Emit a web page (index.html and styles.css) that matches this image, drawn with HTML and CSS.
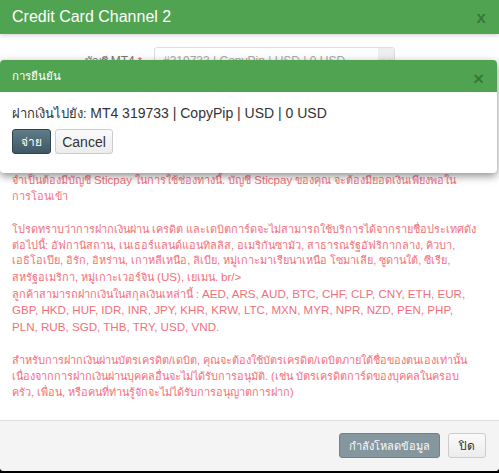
FILE: index.html
```html
<!DOCTYPE html>
<html lang="th">
<head>
  <meta charset="UTF-8">
  <meta name="viewport" content="width=device-width, initial-scale=1.0">
  <title>Credit Card Channel 2</title>
  <link rel="stylesheet" href="styles.css">
</head>
<body>
  <div class="modal">
    <div class="modal-header">
      <h4 class="modal-title">Credit Card Channel 2</h4>
      <button class="close close-main" type="button">x</button>
    </div>

    <div class="modal-body">
      <div class="form-row">
        <label class="form-label">บัญชี <span class="latin">MT4</span> <span class="req">*</span></label>
        <div class="select">
          <span class="select-text">#319733 | CopyPip | USD | 0 USD</span>
          <span class="select-arrow">
            <svg width="8" height="5" viewBox="0 0 8 5"><path d="M0.5 0.5 L4 4 L7.5 0.5" fill="none" stroke="#bbb" stroke-width="1"/></svg>
          </span>
        </div>
      </div>
      <div class="form-row">
        <label class="form-label">จำนวนเงิน <span class="req">*</span></label>
        <div class="select">
          <span class="select-text">0.00</span>
        </div>
      </div>

      <div class="notice">
        <p>จำเป็นต้องมีบัญชี <span class="latin">Sticpay</span> ในการใช้ช่องทางนี้. บัญชี <span class="latin">Sticpay</span> ของคุณ จะต้องมียอดเงินเพียงพอใน<br>การโอนเข้า</p>
        <p>โปรดทราบว่าการฝากเงินผ่าน เครดิต และเดบิตการ์ดจะไม่สามารถใช้บริการได้จากรายชื่อประเทศดัง<br>ต่อไปนี้: อัฟกานิสถาน, เนเธอร์แลนด์แอนทิลลิส, อเมริกันซามัว, สาธารณรัฐอัฟริกากลาง, คิวบา,<br>เอธิโอเปีย, อิรัก, อิหร่าน, เกาหลีเหนือ, ลิเบีย, หมู่เกาะมาเรียนาเหนือ โซมาเลีย, ซูดานใต้, ซีเรีย,<br>สหรัฐอเมริกา, หมู่เกาะเวอร์จิน <span class="latin">(US)</span>, เยเมน. <span class="latin">br/&gt;</span><br>ลูกค้าสามารถฝากเงินในสกุลเงินเหล่านี้ : <span class="latin">AED, ARS, AUD, BTC, CHF, CLP, CNY, ETH, EUR,<br>GBP, HKD, HUF, IDR, INR, JPY, KHR, KRW, LTC, MXN, MYR, NPR, NZD, PEN, PHP,<br>PLN, RUB, SGD, THB, TRY, USD, VND.</span></p>
        <p>สำหรับการฝากเงินผ่านบัตรเครดิต/เดบิต, คุณจะต้องใช้บัตรเครดิต/เดบิตภายใต้ชื่อของตนเองเท่านั้น<br>เนื่องจากการฝากเงินผ่านบุคคลอื่นจะไม่ได้รับการอนุมัติ. (เช่น บัตรเครดิตการ์ดของบุคคลในครอบ<br>ครัว, เพื่อน, หรือคนที่ท่านรู้จักจะไม่ได้รับการอนุญาตการฝาก)</p>
      </div>
    </div>

    <div class="modal-footer">
      <button class="btn btn-dark" type="button" disabled>กำลังโหลดข้อมูล</button>
      <button class="btn btn-default" type="button">ปิด</button>
    </div>
  </div>

  <!-- confirm dialog on top of the deposit modal -->
  <div class="confirm">
    <div class="confirm-header">
      <span class="confirm-title">การยืนยัน</span>
      <button class="close close-small" type="button">&times;</button>
    </div>
    <div class="confirm-body">
      <div class="confirm-text">ฝากเงินไปยัง: <span class="latin">MT4 319733 | CopyPip | USD | 0 USD</span></div>
      <div class="confirm-actions">
        <button class="btn btn-pay" type="button">จ่าย</button>
        <button class="btn btn-default btn-cancel" type="button">Cancel</button>
      </div>
    </div>
  </div>
</body>
</html>
```

FILE: styles.css
```css
body {
  margin: 0;
  background-color: #000;
  font-family: "Liberation Sans", Arial, "Noto Sans", sans-serif;
  color: #333;
}
.modal {
  width: 499px;
  height: 471px;
  display: flex;
  flex-direction: column;
  background-color: #fff;
  border-radius: 0 0 4px 4px;
  overflow: hidden;
}
.modal-header {
  height: 34px;
  flex: none;
  display: flex;
  align-items: center;
  justify-content: space-between;
  padding: 0 13px 0 12px;
  background-color: #50a351;
  box-shadow: 0 2px 4px rgba(0, 0, 0, 0.15);
  position: relative;
}
.modal-title {
  margin: 0;
  color: #fff;
  font-size: 16px;
  font-weight: normal;
}
.close {
  background: none;
  border: none;
  padding: 0;
  cursor: pointer;
  font-family: "Liberation Sans", Arial, sans-serif;
  font-weight: bold;
  color: rgba(0, 0, 0, 0.28);
}
.close-main {
  font-size: 17px;
  line-height: 1;
}
.close-small {
  font-size: 19px;
  line-height: 1;
  margin-top: 4px;
}
.modal-body {
  flex: 1;
  padding: 13px 20px 0 12px;
}
.form-row {
  display: flex;
  align-items: center;
  margin-bottom: 12px;
}
.form-label {
  width: 130px;
  padding-right: 12px;
  text-align: right;
  font-size: 11px;
  color: #777;
}
.form-label .latin {
  font-size: 12px;
}
.req {
  color: #e25555;
}
.select {
  width: 241px;
  height: 28px;
  display: flex;
  align-items: center;
  justify-content: space-between;
  border: 1px solid #ddd;
  border-radius: 3px;
  box-sizing: border-box;
  font-size: 12px;
  color: #aaa;
}
.select-text {
  padding-left: 8px;
}
.select-arrow {
  width: 16px;
  height: 26px;
  display: flex;
  align-items: center;
  justify-content: center;
  background-color: #eee;
}
.notice {
  margin-top: 57px;
  font-size: 10.9px;
  line-height: 15.6px;
  color: #f2707a;
  white-space: nowrap;
}
.notice .latin {
  font-size: 11.6px;
}
.notice p {
  margin: 0 0 18px;
}
.modal-footer {
  flex: none;
  display: flex;
  justify-content: flex-end;
  gap: 8px;
  padding: 12px 13px 13px;
  background-color: #f4f4f4;
  border-top: 1px solid #ddd;
}
.btn {
  height: 25px;
  padding: 0 10px;
  border-radius: 3px;
  font-family: "Liberation Sans", Arial, sans-serif;
  font-size: 12px;
  white-space: nowrap;
  cursor: pointer;
}
.btn-default {
  background: linear-gradient(#fafafa, #ececec);
  border: 1px solid #ccc;
  color: #333;
}
.btn-dark {
  width: 101px;
  padding: 0;
  font-size: 11px;
  background-color: #4a6571;
  border: 1px solid #2f4650;
  color: #fff;
  opacity: 0.65;
}
.btn-pay {
  width: 39px;
  padding: 0;
  background: linear-gradient(#5f7c88, #3e5864);
  border: 1px solid #2e4550;
  color: #fff;
}
.btn-cancel {
  width: 58px;
  padding: 0;
  font-size: 14px;
}
.confirm {
  position: absolute;
  top: 60px;
  left: 0;
  width: 497px;
  background-color: #fff;
  border-radius: 4px;
  box-shadow: 0 3px 8px rgba(0, 0, 0, 0.45);
  overflow: hidden;
}
.confirm-header {
  height: 32px;
  display: flex;
  align-items: center;
  justify-content: space-between;
  padding: 0 13px 0 12px;
  background-color: #50a351;
}
.confirm-title {
  color: #fff;
  font-size: 11.5px;
}
.confirm-body {
  padding: 11px 12px 19px;
}
.confirm-text {
  height: 20px;
  font-size: 13px;
  line-height: 20px;
}
.confirm-text .latin {
  font-size: 14px;
}
.confirm-actions {
  display: flex;
  gap: 4px;
  margin-top: 6px;
}
```
